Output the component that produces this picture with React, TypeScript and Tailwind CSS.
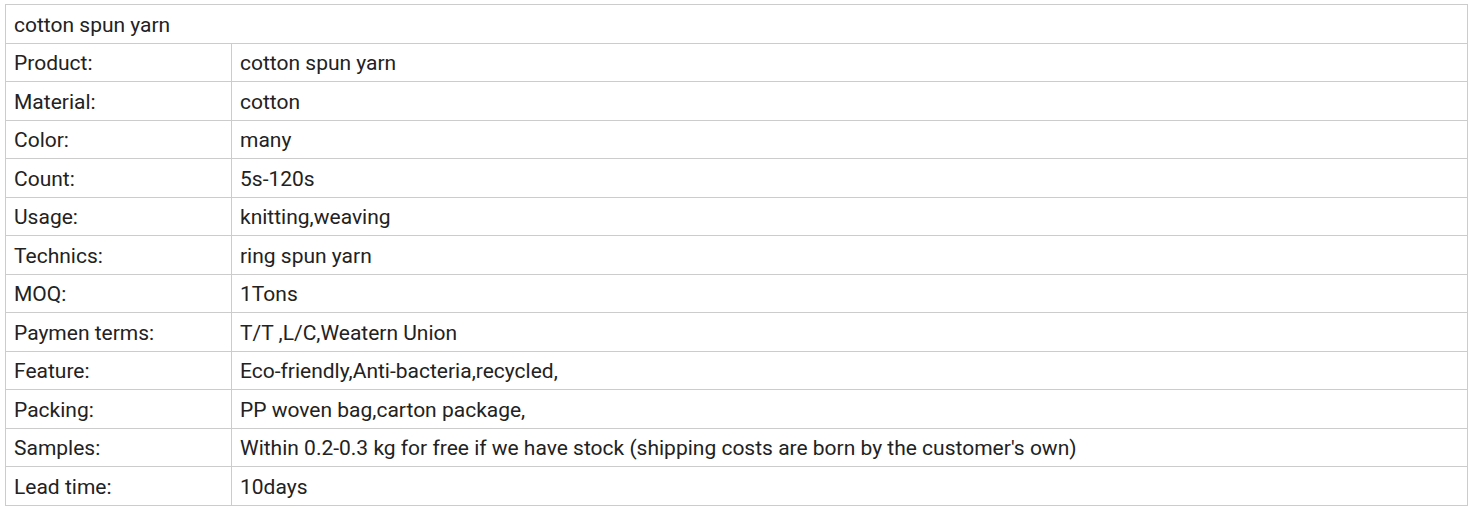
import React from "react";

const rows: [string, string][] = [
  ["Product:", "cotton spun yarn"],
  ["Material:", "cotton"],
  ["Color:", "many"],
  ["Count:", "5s-120s"],
  ["Usage:", "knitting,weaving"],
  ["Technics:", "ring spun yarn"],
  ["MOQ:", "1Tons"],
  ["Paymen terms:", "T/T ,L/C,Weatern Union"],
  ["Feature:", "Eco-friendly,Anti-bacteria,recycled,"],
  ["Packing:", "PP woven bag,carton package,"],
  ["Samples:", "Within 0.2-0.3 kg for free if we have stock (shipping costs are born by the customer's own)"],
  ["Lead time:", "10days"],
];

export default function App() {
  return (
    <div className="bg-white w-[1470px] h-[509px] pl-[5px] pt-[4px]" style={{ fontFamily: "Roboto, sans-serif" }}>
      <table className="border-collapse w-[1463px] text-[21px] leading-[24px] text-[#222]">
        <tbody>
          <tr className="h-[38.5px]">
            <td colSpan={2} className="border border-[#ccc] px-[8px] pt-[2px] pb-0 align-middle">cotton spun yarn</td>
          </tr>
          {rows.map(([k, v]) => (
            <tr key={k} className="h-[38.5px]">
              <td className="border border-[#ccc] px-[8px] pt-[2px] pb-0 w-[226px] align-middle">{k}</td>
              <td className="border border-[#ccc] px-[8px] pt-[2px] pb-0 align-middle">{v}</td>
            </tr>
          ))}
        </tbody>
      </table>
    </div>
  );
}
